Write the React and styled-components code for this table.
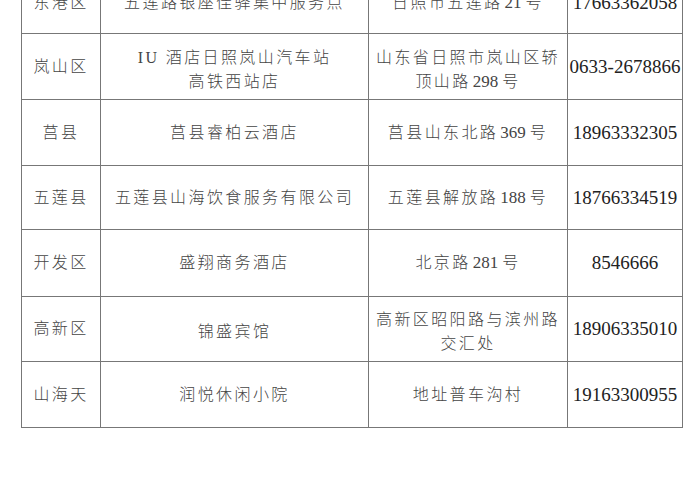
import React from "react";
import styled, { createGlobalStyle } from "styled-components";

const Global = createGlobalStyle`
  html, body { margin: 0; padding: 0; background: #fff; }
  body { width: 700px; height: 500px; overflow: hidden; }
`;

const Page = styled.div`
  width: 700px;
  height: 500px;
  overflow: hidden;
  background: #fff;
`;

const Table = styled.table`
  margin: -29px 0 0 21px;
  width: 661px;
  border-collapse: collapse;
  table-layout: fixed;
  font-family: "Liberation Serif", "Noto Sans CJK SC", serif;
`;

const Row = styled.tr`
  height: ${(p) => p.$h || 65.5}px;
`;

const Cell = styled.td`
  border: 1.5px solid #777;
  text-align: center;
  vertical-align: middle;
  padding: ${(p) => (p.$two ? "6px 0 0" : "0")};
  color: #444;
  font-size: 16px;
  font-weight: 300;
  letter-spacing: 2.4px;
  line-height: 24px;
  white-space: nowrap;
  overflow: hidden;
`;

const Phone = styled(Cell)`
  color: #222;
  font-size: 19px;
  font-weight: 400;
  letter-spacing: 0;
  padding: 0;
`;

const Num = styled.span`
  font-size: 17px;
  letter-spacing: 0;
  margin: 0 4px 0 2px;
`;

const rows = [
  { d: "东港区", n: ["五莲路银座佳驿集中服务点"], a: [["日照市五莲路 ", "21", " 号"]], p: "17663362058" },
  { d: "岚山区", n: ["IU 酒店日照岚山汽车站", "高铁西站店"], a: [["山东省日照市岚山区轿"], ["顶山路 ", "298", " 号"]], p: "0633-2678866" },
  { d: "莒县", n: ["莒县睿柏云酒店"], a: [["莒县山东北路 ", "369", " 号"]], p: "18963332305" },
  { d: "五莲县", n: ["五莲县山海饮食服务有限公司"], a: [["五莲县解放路 ", "188", " 号"]], p: "18766334519" },
  { d: "开发区", n: ["盛翔商务酒店"], a: [["北京路 ", "281", " 号"]], p: "8546666" },
  { d: "高新区", n: ["锦盛宾馆"], a: [["高新区昭阳路与滨州路"], ["交汇处"]], p: "18906335010" },
  { d: "山海天", n: ["润悦休闲小院"], a: [["地址普车沟村"]], p: "19163300955" },
];

const heights = [62, 66, 66, 64, 67, 65, 66];

function Addr({ parts }) {
  return parts.map((line, i) => (
    <React.Fragment key={i}>
      {i > 0 && <br />}
      {line.map((seg, j) =>
        /^\d+$/.test(seg) ? <Num key={j}>{seg}</Num> : seg.trim()
      )}
    </React.Fragment>
  ));
}

export default function App() {
  return (
    <Page>
      <Global />
      <Table>
        <colgroup>
          <col style={{ width: 79 }} />
          <col style={{ width: 268 }} />
          <col style={{ width: 199 }} />
          <col style={{ width: 115 }} />
        </colgroup>
        <tbody>
          {rows.map((r, i) => {
            const two = r.n.length > 1 || r.a.length > 1;
            return (
              <Row key={i} $h={heights[i]}>
                <Cell>{r.d}</Cell>
                <Cell $two={two}>
                  {r.n.map((t, k) => (
                    <React.Fragment key={k}>
                      {k > 0 && <br />}
                      {t}
                    </React.Fragment>
                  ))}
                </Cell>
                <Cell $two={two}>
                  <Addr parts={r.a} />
                </Cell>
                <Phone>{r.p}</Phone>
              </Row>
            );
          })}
        </tbody>
      </Table>
    </Page>
  );
}
